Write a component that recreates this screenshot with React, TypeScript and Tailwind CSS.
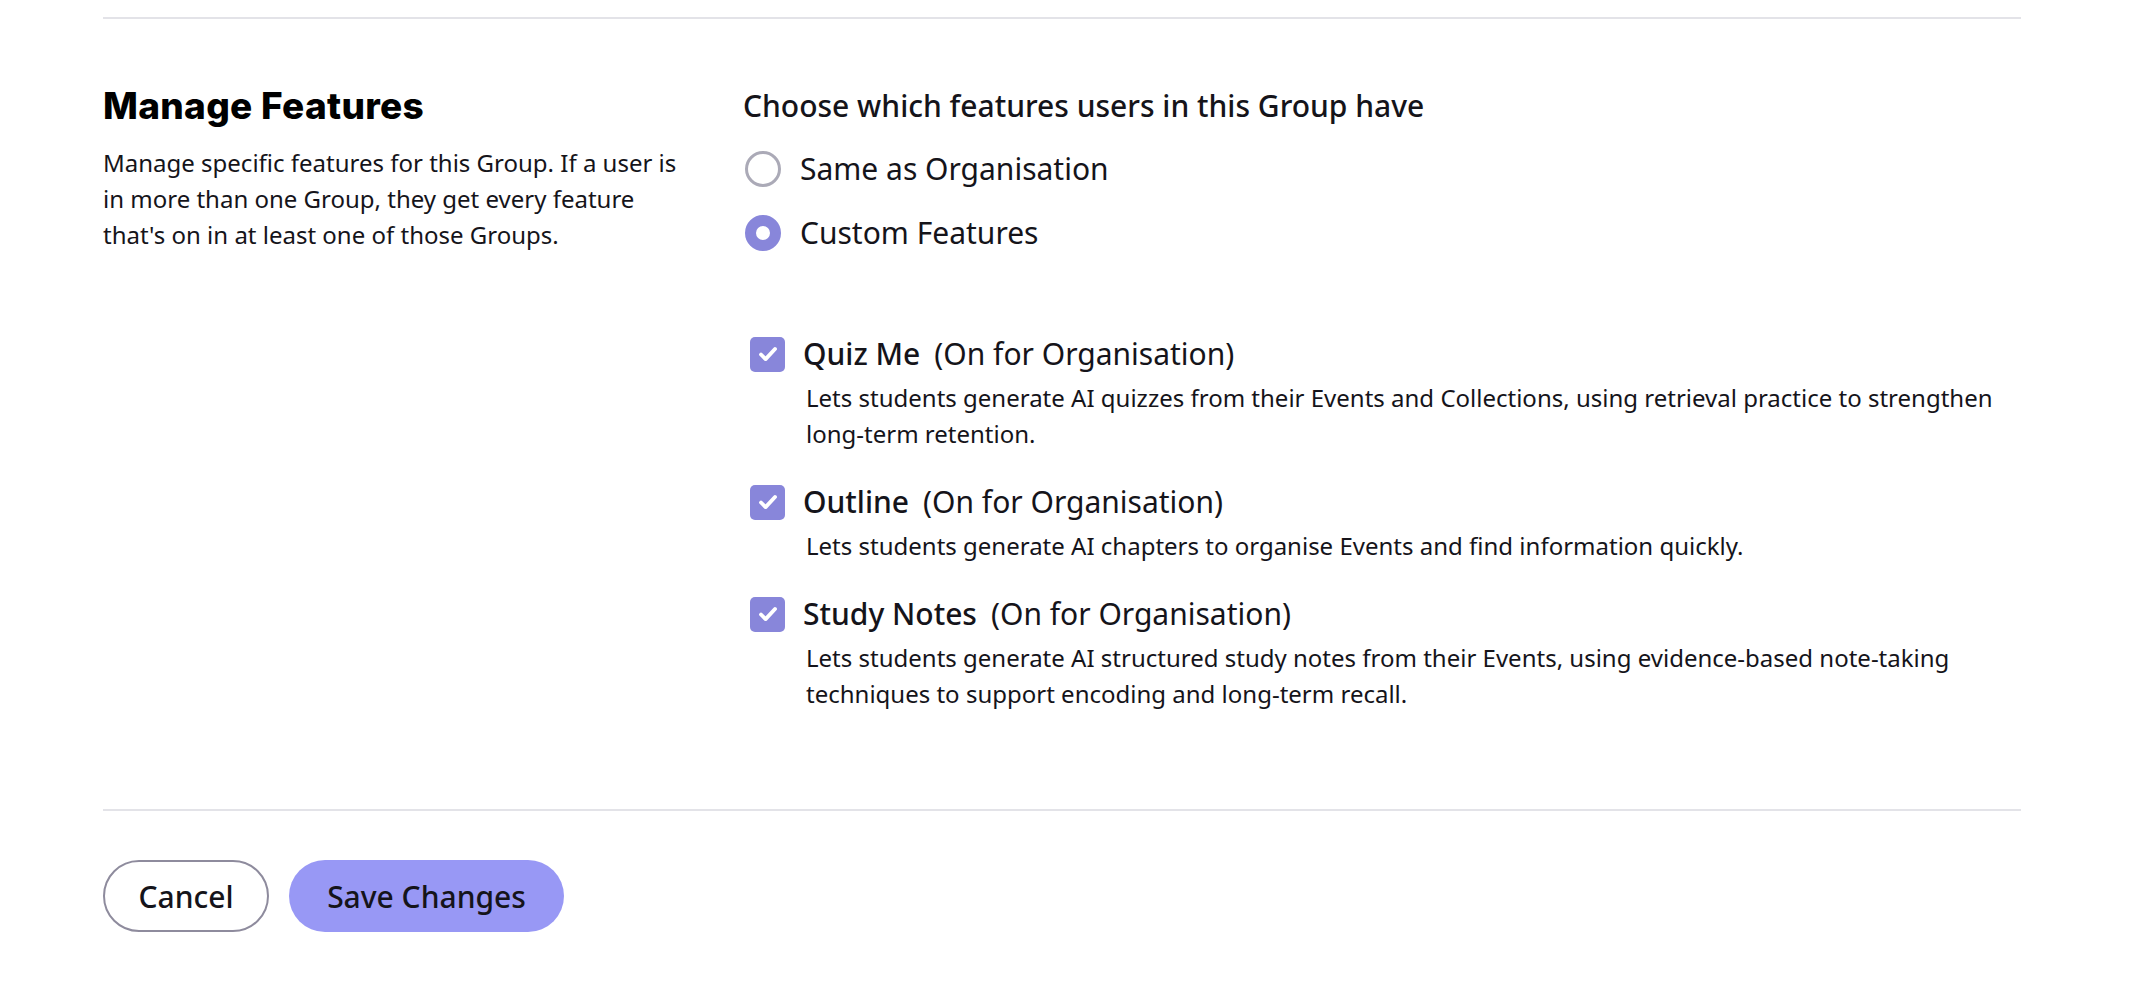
import { useState } from "react";

const FEATURES = [
  {
    id: "quiz",
    name: "Quiz Me",
    description:
      "Lets students generate AI quizzes from their Events and Collections, using retrieval practice to strengthen long-term retention.",
  },
  {
    id: "outline",
    name: "Outline",
    description: "Lets students generate AI chapters to organise Events and find information quickly.",
  },
  {
    id: "notes",
    name: "Study Notes",
    description:
      "Lets students generate AI structured study notes from their Events, using evidence-based note-taking techniques to support encoding and long-term recall.",
  },
];

const body = "font-['Noto_Sans','Open_Sans',sans-serif]";

// keep hyphenated words like "long-term" together on one line
function NoBreakHyphens({ text }: { text: string }) {
  return (
    <>
      {text.split(" ").map((word, i) => (
        <span key={i}>
          {i > 0 && " "}
          {word.includes("-") ? <span className="whitespace-nowrap">{word}</span> : word}
        </span>
      ))}
    </>
  );
}

function Radio({ checked, label, onSelect }: { checked: boolean; label: string; onSelect: () => void }) {
  return (
    <button type="button" onClick={onSelect} className="flex items-center gap-[19px] h-[36px] text-left">
      {checked ? (
        <span className="w-[36px] h-[36px] rounded-full border-[11px] border-[#8886da] bg-white shrink-0" />
      ) : (
        <span className="w-[36px] h-[36px] rounded-full border-[3px] border-[#abaab7] bg-white shrink-0" />
      )}
      <span className="text-[30px] leading-[40px] text-[#15141a]">{label}</span>
    </button>
  );
}

function Checkbox({ checked, onToggle }: { checked: boolean; onToggle: () => void }) {
  return (
    <button
      type="button"
      onClick={onToggle}
      className={`w-[35px] h-[35px] rounded-[5px] shrink-0 flex items-center justify-center ${
        checked ? "bg-[#8886da]" : "border-2 border-[#abaab7] bg-white"
      }`}
    >
      {checked && (
        <svg width="26" height="26" viewBox="0 0 26 26" fill="none">
          <path d="M6 13.5l4.6 4.6L20 8" stroke="white" strokeWidth="3.8" strokeLinecap="round" strokeLinejoin="round" />
        </svg>
      )}
    </button>
  );
}

export default function App() {
  const [mode, setMode] = useState<"org" | "custom">("custom");
  const [enabled, setEnabled] = useState<Record<string, boolean>>({ quiz: true, outline: true, notes: true });

  return (
    <div className={`min-h-screen bg-white ${body} text-[#15141a]`}>
      <div className="ml-[103px] w-[1918px] pt-[17px]">
        <div className="border-t-2 border-[#e3e3e8]" />

        <section className="grid grid-cols-[640px_1fr] pt-[67px] pb-[97px] border-b-2 border-[#e3e3e8]">
          <div>
            <h2 className="font-['Inter',sans-serif] font-extrabold text-[37px] leading-[40px] tracking-[0.3px] text-black">
              Manage Features
            </h2>
            <p className="mt-[19px] w-[590px] text-[24px] leading-[36px]">
              Manage specific features for this Group. If a user is in more than one Group, they get every feature
              that's on in at least one of those Groups.
            </p>
          </div>

          <div>
            <h3 className="text-[30px] leading-[40px] font-medium">Choose which features users in this Group have</h3>

            <div className="mt-[25px] ml-[2px] flex flex-col gap-[28px]">
              <Radio checked={mode === "org"} label="Same as Organisation" onSelect={() => setMode("org")} />
              <Radio checked={mode === "custom"} label="Custom Features" onSelect={() => setMode("custom")} />
            </div>

            <div className="mt-[83px] ml-[7px] flex flex-col gap-[30px]">
              {FEATURES.map((f) => (
                <div key={f.id}>
                  <div className="flex items-center gap-[18px] h-[40px]">
                    <Checkbox
                      checked={enabled[f.id]}
                      onToggle={() => setEnabled((prev) => ({ ...prev, [f.id]: !prev[f.id] }))}
                    />
                    <span className="text-[30px] leading-[40px]">
                      <span className="font-medium">{f.name}</span>
                      <span className="ml-[14px]">(On for Organisation)</span>
                    </span>
                  </div>
                  <p className="mt-[6px] ml-[56px] text-[24px] leading-[36px] max-w-[1215px]">
                    <NoBreakHyphens text={f.description} />
                  </p>
                </div>
              ))}
            </div>
          </div>
        </section>

        <div className="flex gap-[20px] pt-[49px]">
          <button
            type="button"
            className="h-[72px] w-[166px] rounded-full border-2 border-[#8e8b9d] text-[30px] font-medium text-[#15141a]"
          >
            Cancel
          </button>
          <button
            type="button"
            className="h-[72px] w-[275px] rounded-full bg-[#9898f5] text-[30px] font-medium text-[#15141a]"
          >
            Save Changes
          </button>
        </div>
      </div>
    </div>
  );
}
